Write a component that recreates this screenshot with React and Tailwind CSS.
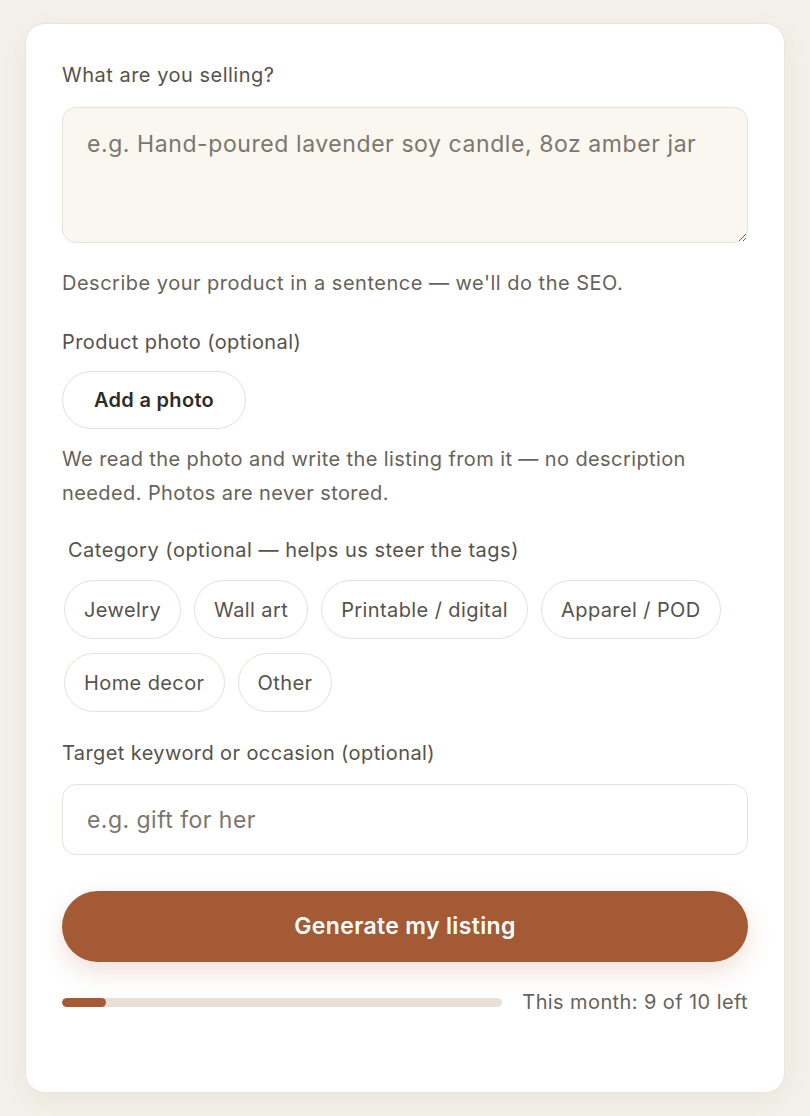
import React, { useState } from 'react';

const categories = [
  'Jewelry',
  'Wall art',
  'Printable / digital',
  'Apparel / POD',
  'Home decor',
  'Other'
];

const ListingForm = () => {
  const [product, setProduct] = useState('');
  const [keyword, setKeyword] = useState('');
  const [category, setCategory] = useState(null);
  const used = 1;
  const limit = 10;

  return (
    <div className="min-h-screen bg-[#f4f1ea] pt-[23px] pb-[25px] px-[25px] font-['Inter',sans-serif]">
      <div className="bg-white rounded-[20px] border border-[#ebe6dc] shadow-[0_8px_30px_rgba(120,100,70,0.08)] pt-[38px] pb-[77px] px-[36px]">
        <label className="block text-[20px] tracking-[0.025em] leading-[26px] text-[#57524c] mb-[19px]">
          What are you selling?
        </label>
        <textarea
          value={product}
          onChange={(e) => setProduct(e.target.value)}
          placeholder="e.g. Hand-poured lavender soy candle, 8oz amber jar"
          className="block w-full h-[136px] rounded-[14px] border border-[#e8e2d6] bg-[#faf7f0] px-[24px] pt-[21px] pb-[22px] text-[23px] tracking-[0.025em] leading-[30px] text-[#3a3632] placeholder:text-[#7b766f] outline-none"
        />
        <p className="mt-[27px] text-[20px] tracking-[0.025em] leading-[26px] text-[#67625b]">
          Describe your product in a sentence — we'll do the SEO.
        </p>

        <label className="block mt-[33px] text-[20px] tracking-[0.02em] leading-[26px] text-[#57524c]">
          Product photo (optional)
        </label>
        <button className="mt-[16px] h-[58px] px-[31px] rounded-full border border-[#e6e1d7] bg-white text-[20px] tracking-[0.015em] font-semibold text-[#2e2b28]">
          Add a photo
        </button>
        <p className="mt-[13px] text-[20px] tracking-[0.02em] leading-[34px] text-[#67625b]">
          We read the photo and write the listing from it — no description needed. Photos are never stored.
        </p>

        <fieldset className="mt-[27px] px-[2px]">
          <legend className="px-[4px] text-[20px] tracking-[0.025em] leading-[26px] text-[#57524c]">
            Category (optional — helps us steer the tags)
          </legend>
          <div className="mt-[17px] flex flex-wrap gap-x-[13px] gap-y-[14px]">
            {categories.map((c) => (
              <button
                key={c}
                onClick={() => setCategory(category === c ? null : c)}
                className={`h-[59px] px-[19px] rounded-full border text-[20px] tracking-[0.02em] ${
                  category === c
                    ? 'border-[#a45a35] bg-[#f7ede6] text-[#a45a35]'
                    : 'border-[#e6e1d7] bg-white text-[#57524c]'
                }`}
              >
                {c}
              </button>
            ))}
          </div>
        </fieldset>

        <label className="block mt-[28px] text-[20px] tracking-[0.02em] leading-[26px] text-[#57524c]">
          Target keyword or occasion (optional)
        </label>
        <input
          value={keyword}
          onChange={(e) => setKeyword(e.target.value)}
          placeholder="e.g. gift for her"
          className="block w-full mt-[18px] h-[71px] rounded-[14px] border border-[#e8e2d6] bg-white px-[24px] text-[23px] tracking-[0.02em] text-[#3a3632] placeholder:text-[#7b766f] outline-none"
        />

        <button className="block w-full mt-[36px] h-[71px] rounded-full bg-[#a45a35] text-white text-[23px] tracking-[0.015em] font-semibold shadow-[0_10px_24px_rgba(164,90,53,0.18)]">
          Generate my listing
        </button>

        <div className="mt-[27px] flex items-center gap-[20px]">
          <div className="flex-1 h-[9px] rounded-full bg-[#e8e0d4] overflow-hidden">
            <div className="h-full rounded-full bg-[#a45a35]" style={{ width: `${(used / limit) * 100}%` }} />
          </div>
          <span className="text-[20px] tracking-[0.02em] leading-[26px] text-[#67625b] whitespace-nowrap">
            This month: {limit - used} of {limit} left
          </span>
        </div>
      </div>
    </div>
  );
};

export default function App() {
  return <ListingForm />;
}
